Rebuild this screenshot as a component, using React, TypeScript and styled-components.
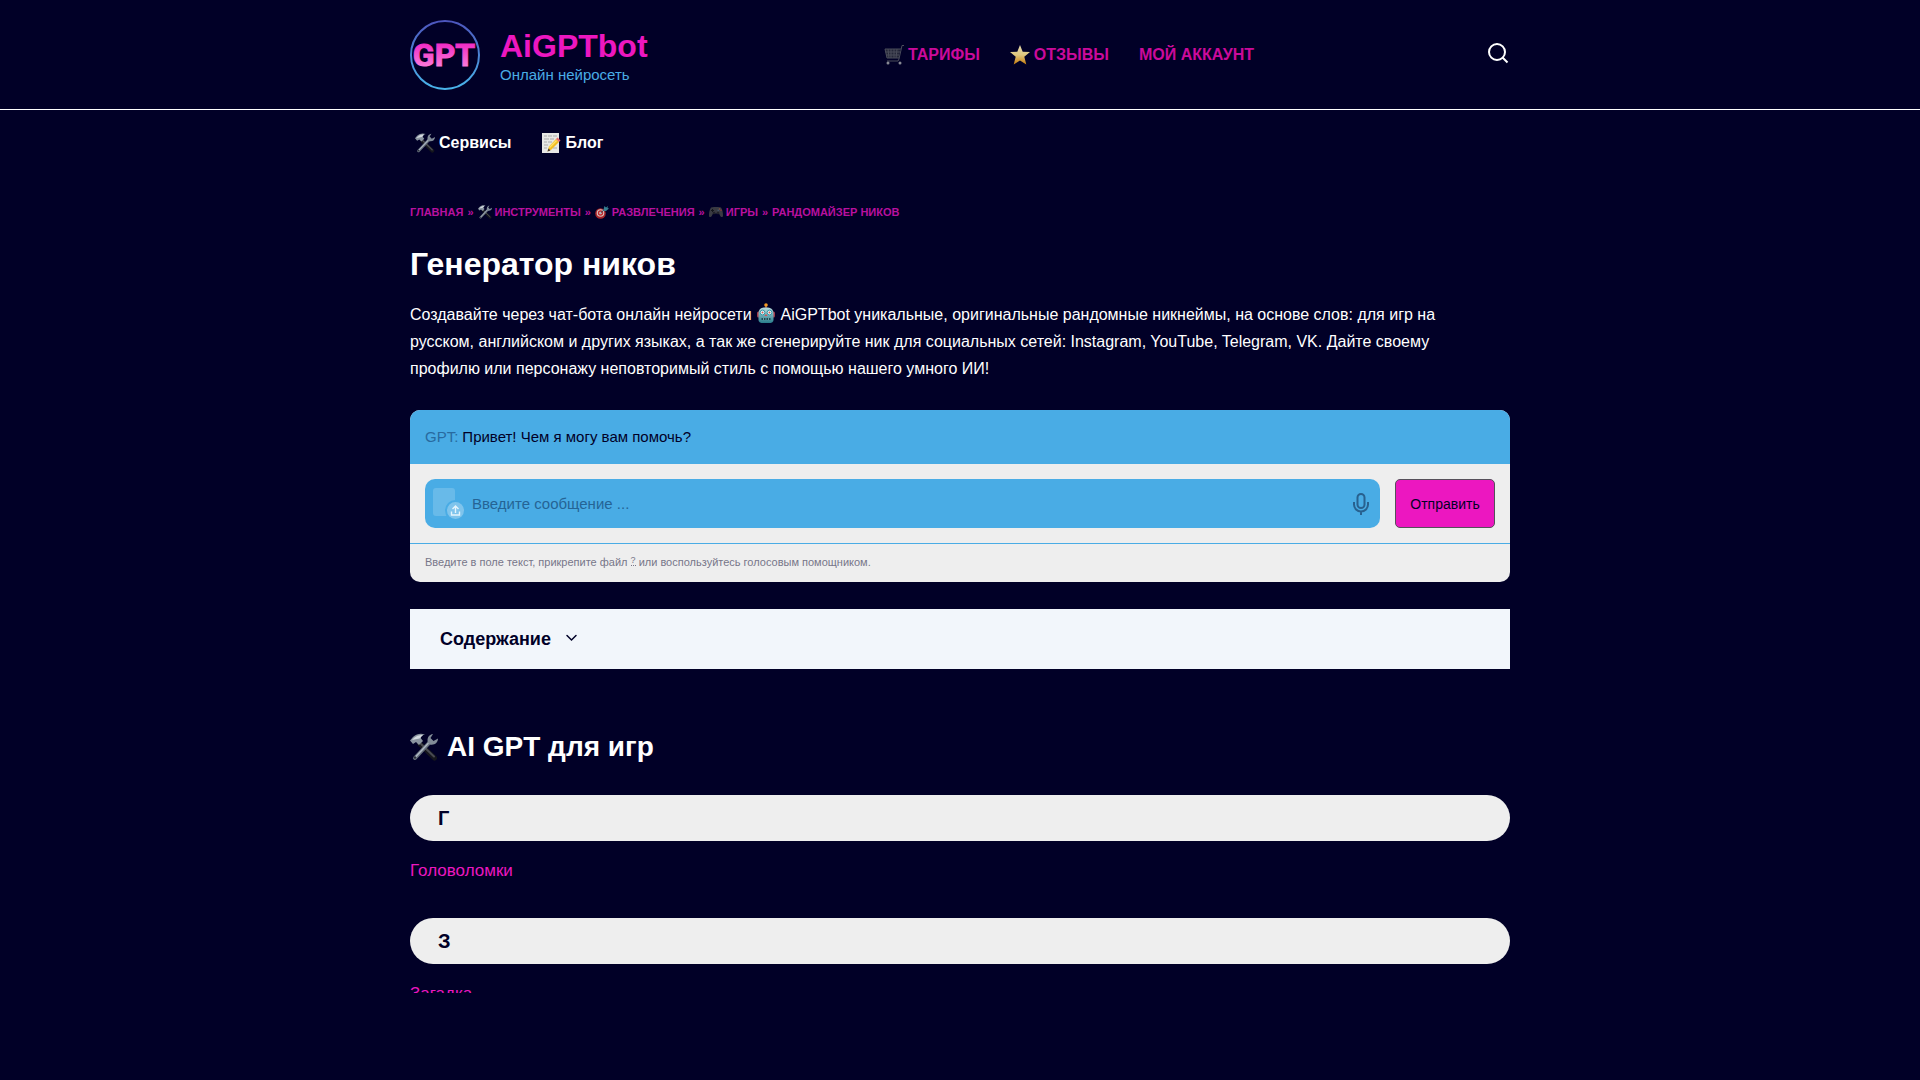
import React from "react";
import styled, { createGlobalStyle } from "styled-components";

const navy = "#010027";
const pink = "#ec17c0";
const blue = "#49ace5";

const Global = createGlobalStyle`
  *, *::before, *::after { box-sizing: border-box; }
  body { margin: 0; background: ${navy}; color: #fff; font-family: "Liberation Sans", Arial, sans-serif; font-size: 16px; }
  h1, h2, h3, p, ul, ol { margin: 0; padding: 0; }
  ul, ol { list-style: none; }
  a { color: inherit; text-decoration: none; }
`;
const Container = styled.div`
  max-width: 1140px;
  margin: 0 auto;
  padding: 0 20px;
`;
const Header = styled.header`
  border-bottom: 1px solid #fff;
`;
const HeaderRow = styled(Container)`
  display: grid;
  grid-template-columns: 1fr auto 256px;
  align-items: center;
  padding-top: 20px;
  padding-bottom: 19px;
`;
const Brand = styled.a`
  display: flex;
  align-items: center;
  gap: 20px;
`;
const BrandName = styled.span`
  display: block;
  padding-top: 2px;
  color: ${pink};
  font-size: 32px;
  line-height: 38px;
  font-weight: 700;
`;
const BrandNote = styled.span`
  display: block;
  color: ${blue};
  font-size: 15px;
  line-height: 20px;
`;
const MainNav = styled.nav`
  display: flex;
  gap: 30px;
  color: #cb0a9b;
  font-weight: 700;
  text-transform: uppercase;
`;
const IconLink = styled.a`
  display: flex;
  align-items: center;
  gap: 4px;
  line-height: 20px;
`;
const SearchButton = styled.button`
  justify-self: end;
  display: flex;
  padding: 0;
  border: 0;
  background: none;
  color: #fff;
`;
const SubNav = styled.nav`
  display: flex;
  gap: 30px;
  padding: 23px 5px 0;
  font-weight: 700;
`;
const Crumbs = styled.ol`
  display: flex;
  flex-wrap: wrap;
  align-items: center;
  gap: 4px;
  margin-top: 51px;
  color: #b9109f;
  font-size: 11px;
  line-height: 16px;
  font-weight: 700;
  text-transform: uppercase;
  li { display: flex; align-items: center; gap: 4px; }
  li + li::before { content: "»"; }
  a { display: flex; align-items: center; gap: 3px; }
`;
const Title = styled.h1`
  margin-top: 22px;
  font-size: 32px;
  line-height: 44px;
`;
const Intro = styled.p`
  max-width: 1060px;
  margin-top: 15px;
  line-height: 27px;
  svg { vertical-align: -3px; }
`;
const Chat = styled.section`
  margin-top: 28px;
  border-radius: 10px;
  overflow: hidden;
  background: #eee;
  color: ${navy};
`;
const Message = styled.p`
  padding: 15px;
  background: ${blue};
  font-size: 15px;
  line-height: 24px;
`;
const Author = styled.span`
  margin-right: 4px;
  color: #286a9f;
`;
const ChatForm = styled.form`
  display: flex;
  gap: 15px;
  padding: 15px;
  border-bottom: 1px solid ${blue};
`;
const Field = styled.div`
  flex: 1;
  display: flex;
  align-items: center;
  height: 49px;
  padding: 0 8px;
  border-radius: 10px;
  background: ${blue};
`;
const PlainButton = styled.button`
  display: flex;
  padding: 0;
  border: 0;
  background: none;
  color: #28618f;
`;
const MessageInput = styled.input`
  flex: 1;
  min-width: 0;
  padding: 0 7px;
  border: 0;
  background: none;
  color: ${navy};
  font: inherit;
  font-size: 15px;
  &::placeholder { color: #256495; opacity: 1; }
`;
const Send = styled.button`
  width: 100px;
  border: 1px solid #55505a;
  border-radius: 5px;
  background: ${pink};
  color: ${navy};
  font: inherit;
  font-size: 14px;
`;
const Hint = styled.p`
  padding: 10px 15px 12px;
  color: #777689;
  font-size: 11px;
  line-height: 16px;
  sup { font-size: 9px; line-height: 0; vertical-align: 3px; border-bottom: 1px dotted; }
`;
const Toc = styled.button`
  display: flex;
  align-items: center;
  gap: 12px;
  width: 100%;
  margin-top: 27px;
  padding: 18px 30px;
  border: 0;
  background: #f2f6fb;
  color: ${navy};
  font: inherit;
  font-size: 18px;
  line-height: 24px;
  font-weight: 700;
`;
const SectionTitle = styled.h2`
  display: flex;
  align-items: center;
  gap: 9px;
  margin-top: 60px;
  font-size: 28px;
  line-height: 36px;
`;
const Catalog = styled.div`
  height: 198px;
  margin-top: 30px;
  overflow: hidden;
`;
const Group = styled.section`
  margin-bottom: 30px;
`;
const Letter = styled.h3`
  padding: 0 28px;
  border-radius: 23px;
  background: #eee;
  color: ${navy};
  font-size: 20px;
  line-height: 46px;
`;
const GroupLink = styled.a`
  display: block;
  margin-top: 14px;
  padding-bottom: 1px;
  color: ${pink};
  font-size: 17px;
  line-height: 32px;
`;

type IconProps = { size: number };

const Logo = () => (
  <svg width="70" height="70" viewBox="0 0 70 70" role="img" aria-label="GPT">
    <defs>
      <linearGradient id="ring" x1="0" y1="0" x2="0" y2="1"><stop stopColor="#4d55bd" /><stop offset="1" stopColor="#49b4ea" /></linearGradient>
      <linearGradient id="word" x1="0" y1="0" x2="0" y2="1"><stop offset="0.2" stopColor="#f02bc4" /><stop offset="0.8" stopColor="#fb79da" /></linearGradient>
    </defs>
    <circle cx="35" cy="35" r="34" fill="none" stroke="url(#ring)" strokeWidth="2" />
    <text x="34" y="46" textAnchor="middle" fontFamily="Roboto, sans-serif" fontWeight="700" fontSize="32" stroke="url(#word)" strokeWidth="1" fill="url(#word)">GPT</text>
  </svg>
);
const Tools = ({ size }: IconProps) => (
  <svg width={size} height={size} viewBox="0 0 28 28" aria-hidden="true">
    <path d="M10 11 24.500 25" stroke="#15161d" strokeWidth="5" strokeLinecap="round" />
    <path d="M11 11 24 23.500" stroke="#484a52" strokeWidth="2" strokeLinecap="round" />
    <path d="M5 25 20 9" stroke="#67707c" strokeWidth="4" strokeLinecap="round" />
    <path d="M5 24.500 20 8.500" stroke="#aeb8c4" strokeWidth="1.500" strokeLinecap="round" />
    <circle cx="5" cy="24.500" r="1.200" fill="#2b2f3b" />
    <path d="M18 10C16.500 5 19 1.500 23 1l-2.500 4 3 3L28 5.500c0 4-3.500 7-8 6z" fill="#818b97" />
    <path d="M0 7.500 3 4c4-3.500 8-4 12-2.500-3 .5-4.500 2-4 4L13 8l-4 4-3-3-3 2z" fill="#8a949f" />
    <path d="M2 7C6 2.500 9 2 13 2L9.500 5.500z" fill="#d4dae0" />
  </svg>
);
const Note = ({ size }: IconProps) => (
  <svg width={size} height={size} viewBox="0 0 20 20" aria-hidden="true">
    <path d="M1 0h17v20H1z" fill="#e8e8e5" />
    <path d="M3 3h3m1 0h4m1 0h4M3 6h5m1 0h4M3 9h3m1 0h4M3 12h4M3 15h3M12 15h4" stroke="#aaa" strokeWidth="1" />
    <path d="m6.500 18.500 1.500-5L15 6l3 3-7.500 7.500z" fill="#f2bd24" />
    <path d="m8 14 7-7 1 1-7 7z" fill="#ffe169" />
    <path d="m15 6 1.500-1.500 3 3L18 9z" fill="#e96a6c" />
    <path d="m6.500 18.500 1-3 2 2z" fill="#44372e" />
  </svg>
);
const Cart = ({ size }: IconProps) => (
  <svg width={size} height={size} viewBox="0 0 20 20" fill="none" aria-hidden="true">
    <path d="M1 4h15l-1 9H3z" fill="#252739" />
    <path d="M20 .5h-2L15 14l-1 2H3M1 4h16M1.500 7H16M2 10h13M3 13h12M1 4l2 9M4 4l1 9M7 4v9M10 4v9M13 4l-1 9" stroke="#4b4d5b" />
    <circle cx="4" cy="18" r="1.500" fill="#888994" /><circle cx="16" cy="18" r="1.500" fill="#888994" />
  </svg>
);
const Star = ({ size }: IconProps) => (
  <svg width={size} height={size} viewBox="0 0 20 20" aria-hidden="true">
    <defs><linearGradient id="gold" x1="0" y1="0" x2="0" y2="1"><stop stopColor="#e1d6ad" /><stop offset="0.5" stopColor="#e0c880" /><stop offset="1" stopColor="#c57b0b" /></linearGradient></defs>
    <path d="m10 0 2.700 6.700 7.300.4-5.700 4.700 2 7.700L10 15.500l-6.300 4 2-7.700L0 7.100l7.300-.4z" fill="url(#gold)" />
  </svg>
);
const Dart = ({ size }: IconProps) => (
  <svg width={size} height={size} viewBox="0 0 14 14" aria-hidden="true">
    <circle cx="5.500" cy="8.500" r="5.300" fill="#a62328" />
    <circle cx="5.500" cy="8" r="3.800" fill="#d8c1bd" /><circle cx="5.500" cy="8" r="2.700" fill="#bd2c30" /><circle cx="5.500" cy="8" r="1.200" fill="#ddd" />
    <path d="m5.500 8 5-4.500" stroke="#333a4b" />
    <path d="m8.500 4.500 1-3.500 1.500 1.500L13 1l-.5 2 1.500.5-3 2.500H8.500z" fill="#357f91" />
  </svg>
);
const Pad = ({ size }: IconProps) => (
  <svg width={size} height={size} viewBox="0 0 14 14" aria-hidden="true">
    <path d="M2 2.500 5 2h4l3 .5c1.500 2 2 5 2 8 0 2-2 2-3 0L10 8.500H4L3 10.500c-1 2-3 2-3 0 0-3 .5-6 2-8z" fill="#393a42" />
    <path d="M3.500 4v3M2 5.500h3" stroke="#15161c" strokeWidth="1" />
    <circle cx="5" cy="8" r="1.300" fill="#202129" /><circle cx="9" cy="8" r="1.300" fill="#202129" />
    <circle cx="10.500" cy="4" r=".8" fill="#86533f" /><circle cx="12" cy="5.300" r=".7" fill="#943c39" /><circle cx="9.200" cy="5.300" r=".7" fill="#45617b" />
  </svg>
);
const Robot = ({ size }: IconProps) => (
  <svg width={size} height={size} viewBox="0 0 20 20" aria-hidden="true">
    <defs><linearGradient id="face" x1="0" y1="0" x2="0" y2="1"><stop stopColor="#b8dcdf" /><stop offset="1" stopColor="#297d8d" /></linearGradient></defs>
    <path d="M10 2v4" stroke="#7b4437" strokeWidth="2" /><circle cx="10" cy="2" r="1.800" fill="#f59a25" />
    <rect x="1" y="8.500" width="18" height="6" rx="1.500" fill="#a63c4a" />
    <path d="M2.500 10C3 6 5 4.500 10 4.500S17 6 17.500 10v7c0 2-2 3-3 3h-9c-1 0-3-1-3-3z" fill="url(#face)" />
    <circle cx="6.500" cy="9.500" r="2.400" fill="#d9fbff" stroke="#3a96a5" /><circle cx="13.500" cy="9.500" r="2.400" fill="#d9fbff" stroke="#3a96a5" />
    <circle cx="6.500" cy="9.500" r="1" fill="#df5852" /><circle cx="13.500" cy="9.500" r="1" fill="#df5852" />
    <path d="m10 11 1.500 2h-3z" fill="#d44f50" /><path d="M5.500 15h9v2h-9z" fill="#174c59" /><path d="M7 16h1m1.500 0h1M12 16h1" stroke="#cfeff0" />
  </svg>
);
const Search = () => (
  <svg width="24" height="24" viewBox="0 0 24 24" fill="none" stroke="currentColor" strokeWidth="2" aria-hidden="true">
    <circle cx="11" cy="9" r="8" /><path d="m16.500 14.500 5 5" />
  </svg>
);
const Attach = () => (
  <svg width="32" height="32" viewBox="0 0 32 32" fill="none" aria-hidden="true">
    <rect width="22" height="28" rx="3" fill="#68bae9" />
    <circle cx="22.500" cy="22.500" r="10.500" fill={blue} /><circle cx="22.500" cy="22.500" r="8.500" fill="#7fc4ec" />
    <path d="M22.500 25v-6.500m-3 2.500 3-3 3 3M18.500 23.500V27h8v-3.500" stroke="#e5f4fc" strokeWidth="1.400" />
  </svg>
);
const Mic = () => (
  <svg width="22" height="24" viewBox="0 0 22 24" fill="none" stroke="currentColor" strokeWidth="2" aria-hidden="true">
    <rect x="7.500" y="2" width="7" height="14" rx="3.500" /><path d="M4 10v2.500a7 7 0 0 0 14 0V10M11 19.500V23" />
  </svg>
);
const Chevron = () => (
  <svg width="16" height="16" viewBox="0 0 16 16" fill="none" stroke="currentColor" strokeWidth="1.500" strokeLinecap="round" aria-hidden="true">
    <path d="m4 4.500 4.500 4.500L13 4.500" />
  </svg>
);

const groups = [
  { letter: "Г", link: "Головоломки" },
  { letter: "З", link: "Загадка" },
];

export default function App() {
  return (
    <>
      <Global />
      <Header>
        <HeaderRow>
          <Brand href="#">
            <Logo />
            <span><BrandName>AiGPTbot</BrandName><BrandNote>Онлайн нейросеть</BrandNote></span>
          </Brand>
          <MainNav>
            <IconLink href="#"><Cart size={20} />Тарифы</IconLink>
            <IconLink href="#"><Star size={20} />Отзывы</IconLink>
            <IconLink href="#">Мой аккаунт</IconLink>
          </MainNav>
          <SearchButton aria-label="Поиск"><Search /></SearchButton>
        </HeaderRow>
      </Header>
      <Container as="main">
        <SubNav>
          <IconLink href="#"><Tools size={20} />Сервисы</IconLink>
          <IconLink href="#"><Note size={20} />Блог</IconLink>
        </SubNav>
        <Crumbs>
          <li><a href="#">Главная</a></li>
          <li><a href="#"><Tools size={14} />Инструменты</a></li>
          <li><a href="#"><Dart size={14} />Развлечения</a></li>
          <li><a href="#"><Pad size={14} />Игры</a></li>
          <li>Рандомайзер ников</li>
        </Crumbs>
        <Title>Генератор ников</Title>
        <Intro>
          Создавайте через чат-бота онлайн нейросети <Robot size={20} /> AiGPTbot уникальные, оригинальные рандомные никнеймы, на основе слов: для игр на русском, английском и других языках, а так же сгенерируйте ник для социальных сетей: Instagram, YouTube, Telegram, VK. Дайте своему профилю или персонажу неповторимый стиль с помощью нашего умного ИИ!
        </Intro>
        <Chat>
          <Message><Author>GPT:</Author>Привет! Чем я могу вам помочь?</Message>
          <ChatForm onSubmit={(e) => e.preventDefault()}>
            <Field>
              <PlainButton type="button" aria-label="Прикрепить файл"><Attach /></PlainButton>
              <MessageInput aria-label="Сообщение" placeholder="Введите сообщение ..." />
              <PlainButton type="button" aria-label="Голосовой ввод"><Mic /></PlainButton>
            </Field>
            <Send>Отправить</Send>
          </ChatForm>
          <Hint>Введите в поле текст, прикрепите файл <sup>?</sup> или воспользуйтесь голосовым помощником.</Hint>
        </Chat>
        <Toc aria-expanded="false">Содержание<Chevron /></Toc>
        <SectionTitle><Tools size={28} />AI GPT для игр</SectionTitle>
        <Catalog>
          {groups.map((g) => (
            <Group key={g.letter}>
              <Letter>{g.letter}</Letter>
              <GroupLink href="#">{g.link}</GroupLink>
            </Group>
          ))}
        </Catalog>
      </Container>
    </>
  );
}
